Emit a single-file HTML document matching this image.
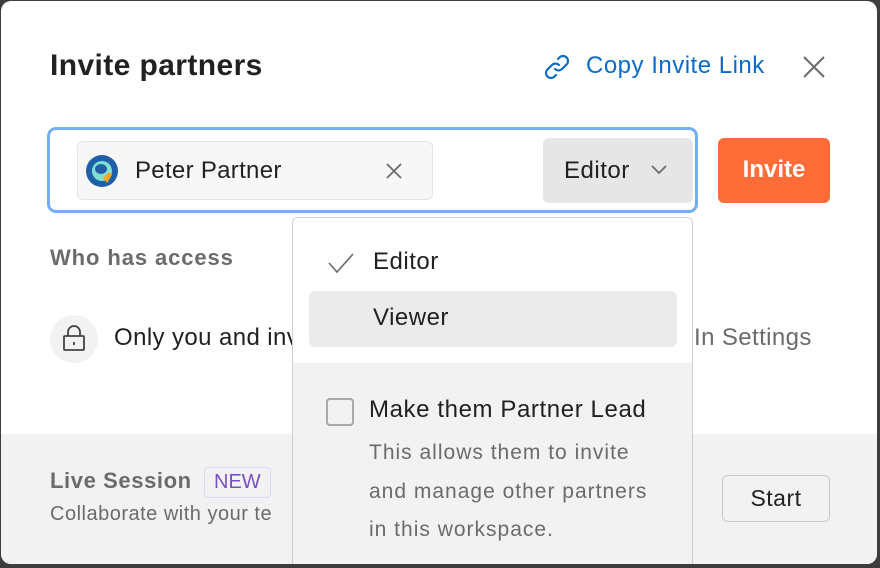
<!DOCTYPE html>
<html><head><meta charset="utf-8"><style>
*{box-sizing:border-box;margin:0;padding:0}
body{width:880px;height:568px;background:#3d3d3d;font-family:"Liberation Sans",sans-serif;position:relative;overflow:hidden}
.modal{position:absolute;left:1px;top:1px;width:876px;height:563px;background:#fff;border-radius:10px;overflow:hidden}
.abs{position:absolute}
.t{white-space:nowrap}
</style></head><body>
<div class="modal">
  <div class="abs t" style="left:49px;top:48px;font-size:30px;font-weight:bold;color:#212121;letter-spacing:0.4px">Invite partners</div>
  <svg class="abs" style="left:541px;top:51px" width="30" height="30" viewBox="0 0 30 30" fill="none" stroke="#0b6bcb" stroke-width="2.2" stroke-linecap="round"><path d="M13 17a5 5 0 0 0 7 0l5-5a5 5 0 0 0-7-7l-2 2"/><path d="M17 13a5 5 0 0 0-7 0l-5 5a5 5 0 0 0 7 7l2-2"/></svg>
  <div class="abs t" style="left:585px;top:51px;font-size:24px;color:#0b6bcb;letter-spacing:0.5px">Copy Invite Link</div>
  <svg class="abs" style="left:802px;top:55px" width="22" height="22" viewBox="0 0 22 22" stroke="#6b6b6b" stroke-width="2"><path d="M1 1L21 21M21 1L1 21"/></svg>

  <div class="abs" style="left:46px;top:126px;width:651px;height:86px;border:3px solid #74aef0;border-radius:9px"></div>
  <div class="abs" style="left:76px;top:140px;width:356px;height:59px;background:#f7f7f7;border:1px solid #e4e4e4;border-radius:6px"></div>
  <svg class="abs" style="left:84px;top:153px" width="34" height="34" viewBox="0 0 34 34"><circle cx="17" cy="17" r="16" fill="#1f5fa8"/><circle cx="17" cy="17" r="10" fill="#7fe0d0"/><ellipse cx="16" cy="15" rx="6" ry="5" fill="#1f5fa8"/><path d="M18 24l6-6 3 3-5 8z" fill="#f5a623"/></svg>
  <div class="abs t" style="left:134px;top:156px;font-size:24px;color:#212121;letter-spacing:0.3px">Peter Partner</div>
  <svg class="abs" style="left:385px;top:162px" width="16" height="16" viewBox="0 0 16 16" stroke="#6b6b6b" stroke-width="1.8"><path d="M1 1L15 15M15 1L1 15"/></svg>
  <div class="abs" style="left:542px;top:137px;width:150px;height:65px;background:#e6e6e6;border-radius:6px"></div>
  <div class="abs t" style="left:563px;top:156px;font-size:24px;color:#212121;letter-spacing:0.5px">Editor</div>
  <svg class="abs" style="left:650px;top:164px" width="16" height="10" viewBox="0 0 16 10" fill="none" stroke="#6b6b6b" stroke-width="1.8"><path d="M1 1l7 7 7-7"/></svg>
  <div class="abs" style="left:717px;top:137px;width:112px;height:65px;background:#ff6c37;border-radius:6px;color:#fff;font-size:24px;font-weight:bold;text-align:center;line-height:64px">Invite</div>

  <div class="abs t" style="left:49px;top:244px;font-size:22px;font-weight:bold;color:#6b6b6b;letter-spacing:0.9px">Who has access</div>
  <div class="abs" style="left:49px;top:314px;width:48px;height:48px;border-radius:50%;background:#f2f2f2"></div>
  <svg class="abs" style="left:61px;top:323px" width="24" height="28" viewBox="0 0 24 28" fill="none" stroke="#444" stroke-width="1.8"><path d="M6 12V8a6 6 0 0 1 12 0v4"/><rect x="2" y="12" width="20" height="14" rx="1"/><path d="M12 18v3"/></svg>
  <div class="abs t" style="left:113px;top:323px;font-size:24px;color:#212121;letter-spacing:0.4px">Only you and inv</div>
  <div class="abs t" style="left:693px;top:323px;font-size:24px;color:#6b6b6b;letter-spacing:0.4px">In Settings</div>

  <div class="abs" style="left:0;top:433px;width:876px;height:130px;background:#f2f2f2"></div>
  <div class="abs t" style="left:49px;top:467px;font-size:22px;font-weight:bold;color:#6b6b6b;letter-spacing:0.6px">Live Session</div>
  <div class="abs t" style="left:203px;top:466px;height:31px;padding:0 9px;border:1px solid #e1d6f5;border-radius:4px;font-size:20px;color:#7b4fc4;line-height:29px">NEW</div>
  <div class="abs t" style="left:49px;top:502px;font-size:20px;color:#6b6b6b;letter-spacing:0.5px">Collaborate with your te</div>
  <div class="abs" style="left:721px;top:474px;width:108px;height:47px;border:1px solid #c8c8c8;border-radius:6px;font-size:23px;color:#212121;text-align:center;line-height:45px;letter-spacing:0.5px">Start</div>

  <div class="abs" style="left:291px;top:216px;width:401px;height:360px;background:#f2f2f2;border:1px solid #cfcfcf;border-radius:6px;overflow:hidden">
    <div style="height:145px;background:#fff"></div>
    <svg class="abs" style="left:34px;top:34px" width="28" height="22" viewBox="0 0 28 22" fill="none" stroke="#6b6b6b" stroke-width="1.6"><path d="M2 11l8 9L26 2"/></svg>
    <div class="abs t" style="left:80px;top:30px;font-size:24px;color:#212121;letter-spacing:0.5px">Editor</div>
    <div class="abs" style="left:16px;top:73px;width:368px;height:56px;background:#ebebeb;border-radius:6px"></div>
    <div class="abs t" style="left:80px;top:86px;font-size:24px;color:#212121;letter-spacing:0.5px">Viewer</div>
    <div class="abs" style="left:33px;top:180px;width:28px;height:28px;border:2px solid #a9a9a9;border-radius:4px"></div>
    <div class="abs t" style="left:76px;top:178px;font-size:24px;color:#212121;letter-spacing:0.6px">Make them Partner Lead</div>
    <div class="abs t" style="left:76px;top:216px;font-size:21px;color:#6b6b6b;line-height:38.5px;letter-spacing:1px">This allows them to invite<br>and manage other partners<br>in this workspace.</div>
  </div>
</div>
</body></html>
